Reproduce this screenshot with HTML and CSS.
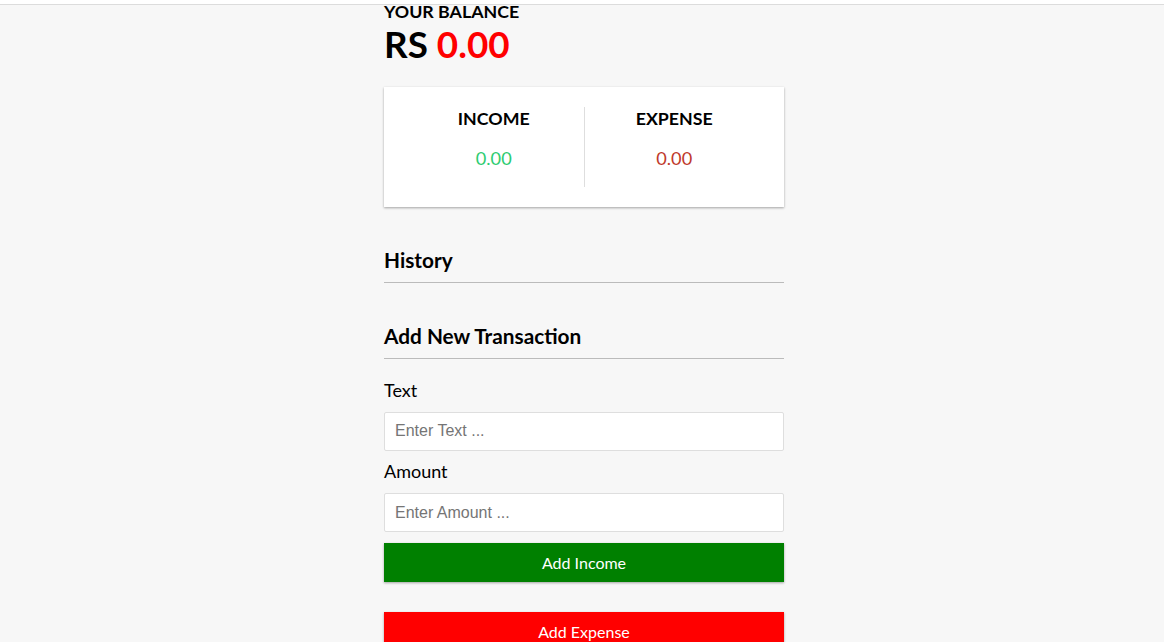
FILE: index.html
```html
<!DOCTYPE html>
<html lang="en">
<head>
<meta charset="UTF-8">
<title>Expense Tracker</title>
<link rel="stylesheet" href="styles.css">
</head>
<body>
<div class="topbar"></div>
<div class="container">
  <h4 class="balance-title">Your Balance</h4>
  <h1 class="balance">RS <span class="balance-value">0.00</span></h1>

  <div class="inc-exp">
    <div class="inc-exp-col first">
      <h4>Income</h4>
      <p class="money plus">0.00</p>
    </div>
    <div class="inc-exp-col">
      <h4>Expense</h4>
      <p class="money minus">0.00</p>
    </div>
  </div>

  <h3>History</h3>
  <ul class="list"></ul>

  <h3>Add New Transaction</h3>
  <form class="form">
    <div class="form-control">
      <label for="text">Text</label>
      <input type="text" id="text" placeholder="Enter Text ...">
    </div>
    <div class="form-control">
      <label for="amount">Amount</label>
      <input type="text" id="amount" placeholder="Enter Amount ...">
    </div>
    <button type="button" class="btn btn-income">Add Income</button>
    <button type="button" class="btn btn-expense">Add Expense</button>
  </form>
</div>
</body>
</html>
```

FILE: styles.css
```css
* {
  box-sizing: border-box;
}

html, body {
  margin: 0;
}

body {
  background-color: #f7f7f7;
  font-family: "Lato", "Liberation Sans", sans-serif;
  color: #000;
  padding-left: 4px;
  min-height: 100vh;
}

.topbar {
  position: fixed;
  top: 0;
  left: 0;
  right: 0;
  height: 5px;
  background: #fff;
  border-bottom: 1px solid #dcdcdc;
  z-index: 10;
}

.container {
  width: 400px;
  margin: 0 auto;
}

h4 {
  margin: 0;
  font-size: 17.8px;
  font-weight: 700;
  text-transform: uppercase;
  line-height: 22px;
}

.balance {
  margin: 0;
  font-size: 36.8px;
  font-weight: 700;
  line-height: 44.2px;
}

.balance-value {
  color: #ff0000;
}

.inc-exp {
  background-color: #fff;
  box-shadow: 0 1px 3px rgba(0, 0, 0, 0.12), 0 1px 2px rgba(0, 0, 0, 0.24);
  padding: 20px;
  display: flex;
  margin: 21px 0 20px;
}

.inc-exp-col {
  flex: 1;
  text-align: center;
}

.inc-exp-col.first {
  border-right: 1px solid #dedede;
}

.money {
  font-size: 18.2px;
  line-height: 22px;
  margin: 18px 0;
}

.money.plus {
  color: #2ecc71;
}

.money.minus {
  color: #c0392b;
}

h3 {
  font-size: 20.8px;
  font-weight: 700;
  line-height: 26.4px;
  border-bottom: 1px solid #bbb;
  padding-bottom: 8.5px;
  margin: 40px 0 10px;
}

.list {
  margin: 0;
  padding: 0;
  list-style: none;
}

.form {
  display: flex;
  flex-direction: column;
}

.form-control {
  display: flex;
  flex-direction: column;
}

.form-control label {
  font-size: 18px;
  line-height: 21.6px;
  margin: 10.5px 0;
}

.form-control input {
  font-family: "Liberation Sans", Arial, sans-serif;
  font-size: 16px;
  height: 39px;
  padding: 0 10px;
  border: 1px solid #dedede;
  border-radius: 2px;
  background: #fff;
  width: 100%;
}

.form-control input::placeholder {
  color: #757575;
}

.btn {
  font-family: "Lato", "Liberation Sans", sans-serif;
  font-size: 16px;
  line-height: 19px;
  color: #fff;
  border: 0;
  padding: 10px;
  height: 39px;
  width: 100%;
  margin: 11px 0 30px;
  box-shadow: 0 1px 3px rgba(0, 0, 0, 0.12), 0 1px 2px rgba(0, 0, 0, 0.24);
  cursor: pointer;
}

.btn-income {
  background-color: #008000;
}

.btn-expense {
  background-color: #ff0000;
  margin-top: 0;
}
```
